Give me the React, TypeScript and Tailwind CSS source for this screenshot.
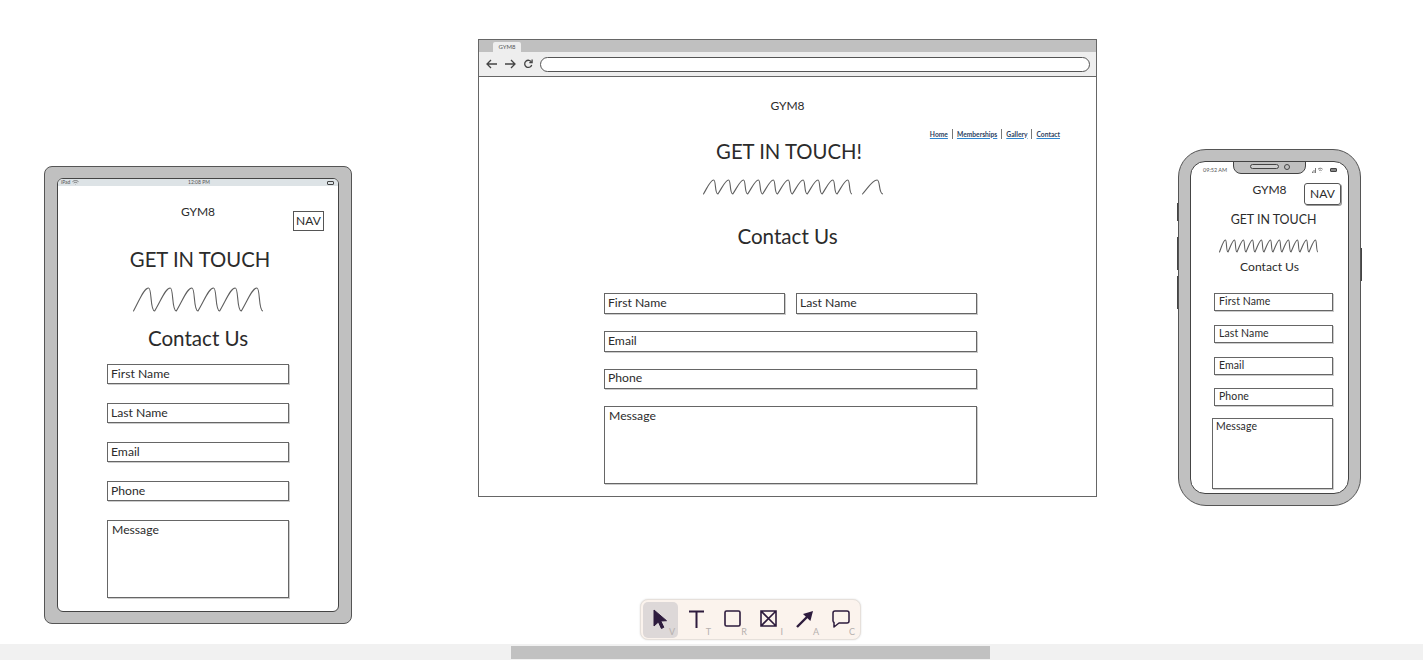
const FONT = "font-['Lato',sans-serif] text-[#2b2b2b]";

// wavy pen stroke used under the headings
function Scribble({ peaks, width, height }: { peaks: number; width: number; height: number }) {
  const step = width / peaks;
  const h = height - 1;
  let d = `M0.5 ${h}`;
  for (let i = 0; i < peaks; i++) {
    const x = step * i;
    d += ` C${x + step * 0.3} ${h * 0.55} ${x + step * 0.5} 1 ${x + step * 0.72} 1`;
    d += ` C${x + step * 0.88} 1 ${x + step * 0.78} ${h} ${x + step} ${h}`;
  }
  return (
    <svg width={width} height={height} viewBox={`0 0 ${width} ${height}`} fill="none" className="block shrink-0">
      <path d={d} stroke="#5f5f5f" strokeWidth="1.1" strokeLinejoin="round" strokeLinecap="round" />
    </svg>
  );
}

function Field({ label, className }: { label: string; className: string }) {
  return <div className={`border border-[#666] bg-white shadow-[1px_1px_0_#ccc] ${className}`}>{label}</div>;
}

function TabletFrame() {
  const field = "h-[20px] w-[182px] pl-[3px] text-[12.2px] leading-[17px]";
  return (
    <div className="absolute left-[44px] top-[166px] h-[458px] w-[308px] rounded-[8px] border border-[#555] bg-[#c0c0c0] px-[12px] pt-[11px]">
      <div className={`relative flex h-[434px] w-[282px] flex-col items-center overflow-hidden rounded-[6px] border border-[#444] bg-white ${FONT}`}>
        <div className="relative flex h-[7px] w-full shrink-0 items-center justify-between bg-[#dde3e6] px-[3px] text-[5px] leading-none text-[#555]">
          <span className="flex items-center gap-[2px]">
            iPad
            <svg width="7" height="5" viewBox="0 0 7 5" fill="none" stroke="#555" strokeWidth="0.7">
              <path d="M0.5 1.6c1.8-1.4 4.2-1.4 6 0M1.7 3c1.1-.8 2.5-.8 3.6 0M3.5 4.4v.3" />
            </svg>
          </span>
          <span className="absolute left-[130px]">12:08 PM</span>
          <span className="mr-[1px] h-[4px] w-[7px] rounded-[1px] border border-[#444]" />
        </div>
        <div className="mt-[18px] h-[16px] text-[12px] leading-[16px]">GYM8</div>
        <div className="absolute left-[235px] top-[32px] h-[20px] w-[31px] border border-[#555] text-center text-[12px] leading-[18px]">NAV</div>
        <div className="ml-[4px] mt-[26px] h-[26px] text-[20.3px] leading-[26px]">GET IN TOUCH</div>
        <div className="mt-[15px]">
          <Scribble peaks={6} width={130} height={25} />
        </div>
        <div className="mt-[13px] h-[26px] text-[20.6px] leading-[26px]">Contact Us</div>
        <div className="mt-[13px] flex w-[182px] flex-col gap-[19px]">
          <Field label="First Name" className={field} />
          <Field label="Last Name" className={field} />
          <Field label="Email" className={field} />
          <Field label="Phone" className={field} />
          <Field label="Message" className="h-[78px] w-[182px] pl-[4px] text-[12.2px] leading-[17px]" />
        </div>
      </div>
    </div>
  );
}

function BrowserFrame() {
  const field = "pl-[3px] text-[12.2px] leading-[17px]";
  const link = "underline decoration-[#2f86d1]";
  return (
    <div className={`absolute left-[478px] top-[39px] flex h-[458px] w-[619px] flex-col border border-[#666] bg-white ${FONT}`}>
      <div className="flex h-[12px] shrink-0 items-end bg-[#c0c0c0] pl-[14px]">
        <div className="h-[10px] w-[28px] rounded-t-[2px] bg-[#eeeeee] text-center text-[6px] leading-[10px] text-[#555]">GYM8</div>
      </div>
      <div className="flex h-[25px] shrink-0 items-center border-b border-[#666] bg-[#eeeeee] pl-[7px] pr-[6px] text-[#444]">
        <svg width="12" height="10" viewBox="0 0 12 10" fill="none" stroke="#444" strokeWidth="1.3" className="mr-[6px]">
          <path d="M11 5H1M5 1L1 5l4 4" />
        </svg>
        <svg width="12" height="10" viewBox="0 0 12 10" fill="none" stroke="#444" strokeWidth="1.3" className="mr-[7px]">
          <path d="M1 5h10M7 1l4 4-4 4" />
        </svg>
        <svg width="10" height="10" viewBox="0 0 9 10" fill="none" stroke="#444" strokeWidth="1.3" className="mr-[7px]">
          <path d="M8 3.2A3.6 3.6 0 1 0 8.2 6" />
          <path d="M8.6 0.6v3H5.8" />
        </svg>
        <div className="h-[15px] flex-1 rounded-full border border-[#555] bg-white" />
      </div>
      <div className="relative flex flex-1 flex-col items-center">
        <div className="mt-[21px] h-[16px] text-[12px] leading-[15px]">GYM8</div>
        <div className="absolute right-[36px] top-[52px] flex items-center text-[6.7px] font-bold leading-[9px] text-[#2c3f5f]">
          <span className={link}>Home</span>
          <span className="mx-[4px] h-[10px] w-px bg-[#777]" />
          <span className={link}>Memberships</span>
          <span className="mx-[4px] h-[10px] w-px bg-[#777]" />
          <span className={link}>Gallery</span>
          <span className="mx-[4px] h-[10px] w-px bg-[#777]" />
          <span className={link}>Contact</span>
        </div>
        <div className="ml-[3px] mt-[24px] h-[26px] text-[20.3px] leading-[26px]">GET IN TOUCH!</div>
        <div className="ml-[11px] mt-[15px] flex h-[16px] items-start gap-[10px]">
          <Scribble peaks={10} width={149} height={16} />
          <Scribble peaks={1} width={21} height={16} />
        </div>
        <div className="mt-[29px] h-[26px] text-[20.6px] leading-[25px]">Contact Us</div>
        <div className="ml-[6px] mt-[43px] flex w-[373px] flex-col gap-[17px]">
          <div className="flex gap-[11px]">
            <Field label="First Name" className={`h-[21px] w-[181px] ${field}`} />
            <Field label="Last Name" className={`h-[21px] w-[181px] ${field}`} />
          </div>
          <Field label="Email" className={`h-[21px] ${field}`} />
          <Field label="Phone" className={`h-[20px] pl-[3px] text-[12.2px] leading-[15px]`} />
          <Field label="Message" className="h-[78px] pl-[4px] text-[12.2px] leading-[17px]" />
        </div>
      </div>
    </div>
  );
}

function PhoneFrame() {
  const field = "h-[18px] w-[119px] pl-[4px] text-[10.5px] leading-[15px] tracking-[0.1px]";
  return (
    <div className="absolute left-[1178px] top-[149px] h-[357px] w-[183px] rounded-[28px] border border-[#555] bg-[#c0c0c0] p-[11px]">
      <span className="absolute -left-[2px] top-[53px] h-[18px] w-px bg-[#444]" />
      <span className="absolute -left-[2px] top-[87px] h-[33px] w-px bg-[#444]" />
      <span className="absolute -left-[2px] top-[126px] h-[33px] w-px bg-[#444]" />
      <span className="absolute -right-[2px] top-[98px] h-[33px] w-px bg-[#444]" />
      <div className={`relative flex h-[333px] w-[159px] flex-col items-center overflow-hidden rounded-[15px] border border-[#444] bg-white ${FONT}`}>
        <div className="absolute left-[12px] top-[5px] text-[5.5px] leading-[7px] text-[#555]">09:52 AM</div>
        <div className="absolute left-[42px] top-[-1px] flex h-[13px] w-[73px] items-center justify-center gap-[5px] rounded-b-[8px] border border-[#444] bg-[#c0c0c0] pb-[2px]">
          <span className="h-[5px] w-[29px] rounded-full border border-[#444] bg-[#cfcfcf]" />
          <span className="h-[6px] w-[6px] rounded-full border border-[#444]" />
        </div>
        <div className="absolute right-[11px] top-[5px] flex items-center gap-[2px]">
          <svg width="16" height="6" viewBox="0 0 16 6" fill="none" stroke="#555" strokeWidth="0.8">
            <path d="M0.5 6V4.5M2 6V3M3.5 6V1" />
            <path d="M6 2.2c1.4-1.3 3.2-1.3 4.6 0M7 3.6c.8-.7 1.8-.7 2.6 0M8.3 5.4v.2" />
          </svg>
          <span className="h-[4px] w-[7px] rounded-[1px] border border-[#444] bg-[#888]" />
        </div>
        <div className="mt-[20px] h-[16px] text-[12px] leading-[16px]">GYM8</div>
        <div className="absolute left-[113px] top-[21px] h-[22px] w-[37px] rounded-[3px] border border-[#555] text-center text-[12px] leading-[20px] shadow-[1px_1px_0_#999]">NAV</div>
        <div className="ml-[8px] mt-[13px] h-[18px] text-[12.4px] leading-[18px]">GET IN TOUCH</div>
        <div className="-ml-[2px] mt-[10px]">
          <Scribble peaks={11} width={99} height={14} />
        </div>
        <div className="mt-[6px] h-[16px] text-[12.1px] leading-[15px]">Contact Us</div>
        <div className="ml-[8px] mt-[18px] flex w-[119px] flex-col gap-[14px]">
          <Field label="First Name" className={field} />
          <Field label="Last Name" className={field} />
          <Field label="Email" className={field} />
          <Field label="Phone" className={`-mt-[1px] ${field}`} />
          <Field label="Message" className="-mt-[2px] h-[71px] w-[121px] self-end pl-[3px] text-[10.5px] leading-[15px] tracking-[0.1px]" />
        </div>
      </div>
    </div>
  );
}

const TOOLS = [
  {
    key: "V",
    active: true,
    icon: <path d="M5 3l0 16 4.4-4 3 6.5 2.4-1.2-3-6.3 5.7-.3z" fill="#2d1b3d" stroke="#2d1b3d" strokeLinejoin="round" />,
  },
  { key: "T", icon: <path d="M4 4.5h15M11.5 4.5V21" stroke="#2d1b3d" strokeWidth="2" fill="none" /> },
  { key: "R", icon: <rect x="4" y="4" width="15" height="15" rx="1.5" stroke="#2d1b3d" strokeWidth="1.6" fill="none" /> },
  {
    key: "I",
    icon: <path d="M4 4h15v15H4zM4 4l15 15M19 4L4 19" stroke="#2d1b3d" strokeWidth="1.6" fill="none" />,
  },
  {
    key: "A",
    icon: (
      <>
        <path d="M4 20L15 9" stroke="#2d1b3d" strokeWidth="2.4" fill="none" />
        <path d="M10 7l10-3-2.6 10z" fill="#2d1b3d" />
      </>
    ),
  },
  {
    key: "C",
    icon: (
      <path
        d="M6 4h12a2 2 0 0 1 2 2v8a2 2 0 0 1-2 2H10l-5 4v-4.5A2 2 0 0 1 4 14V6a2 2 0 0 1 2-2z"
        stroke="#2d1b3d"
        strokeWidth="1.5"
        strokeLinejoin="round"
        fill="none"
      />
    ),
  },
];

function Toolbar() {
  return (
    <div className="absolute left-[640px] top-[599px] flex h-[41px] w-[221px] items-center gap-[1px] rounded-[8px] border border-[#e6e0db] bg-[#fbf3ed] px-[2px] shadow-[0_0_2px_#ddd]">
      {TOOLS.map((t) => (
        <div
          key={t.key}
          className={`relative flex h-[36px] w-[35.5px] items-center justify-center rounded-[5px] ${t.active ? "bg-[#ddd8d8]" : ""}`}
        >
          <svg width="24" height="24" viewBox="0 0 24 24" className="-mt-[2px]">
            {t.icon}
          </svg>
          <span className="absolute bottom-[1px] right-[3px] font-['Lato',sans-serif] text-[9px] leading-[10px] text-[#b5b0ad]">
            {t.key}
          </span>
        </div>
      ))}
    </div>
  );
}

export default function App() {
  return (
    <div className="flex h-[660px] w-full flex-col overflow-hidden bg-white">
      <div className="relative flex-1">
        <TabletFrame />
        <BrowserFrame />
        <PhoneFrame />
        <Toolbar />
      </div>
      <div className="flex h-[16px] shrink-0 items-center bg-[#f1f1f1]">
        <div className="ml-[511px] h-[13px] w-[479px] bg-[#c1c1c1]" />
      </div>
    </div>
  );
}
